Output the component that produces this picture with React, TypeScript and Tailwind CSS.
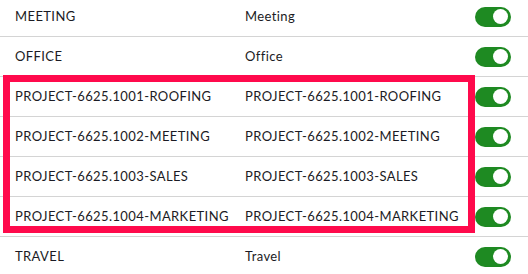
import React from "react";

type Row = { code: string; label: string };

const rows: Row[] = [
  { code: "MEETING", label: "Meeting" },
  { code: "OFFICE", label: "Office" },
  { code: "PROJECT-6625.1001-ROOFING", label: "PROJECT-6625.1001-ROOFING" },
  { code: "PROJECT-6625.1002-MEETING", label: "PROJECT-6625.1002-MEETING" },
  { code: "PROJECT-6625.1003-SALES", label: "PROJECT-6625.1003-SALES" },
  { code: "PROJECT-6625.1004-MARKETING", label: "PROJECT-6625.1004-MARKETING" },
  { code: "TRAVEL", label: "Travel" },
];

function Toggle() {
  return (
    <div className="flex h-[20px] w-[36px] items-center justify-end rounded-full bg-[#1e8a22] px-[3px]">
      <div className="h-[15px] w-[15px] rounded-full bg-white" />
    </div>
  );
}

export default function App() {
  return (
    <div className="relative h-[274px] w-[528px] overflow-hidden bg-white font-['Lato',sans-serif] text-[13px] tracking-[0.4px] text-[#1b1b24]">
      <div className="-mt-[3px] flex flex-col">
        {rows.map((r) => (
          <div
            key={r.code}
            className="flex h-[40px] items-center border-b border-[#d4d4d4] pl-[15px] pr-[17px]"
          >
            <div className="w-[230px] shrink-0">{r.code}</div>
            <div className="flex-1">{r.label}</div>
            <Toggle />
          </div>
        ))}
      </div>

      {/* highlight around the project codes */}
      <div className="pointer-events-none absolute left-[3px] top-[75px] h-[158px] w-[472px] border-[7px] border-[#ff0a4c]" />
    </div>
  );
}
